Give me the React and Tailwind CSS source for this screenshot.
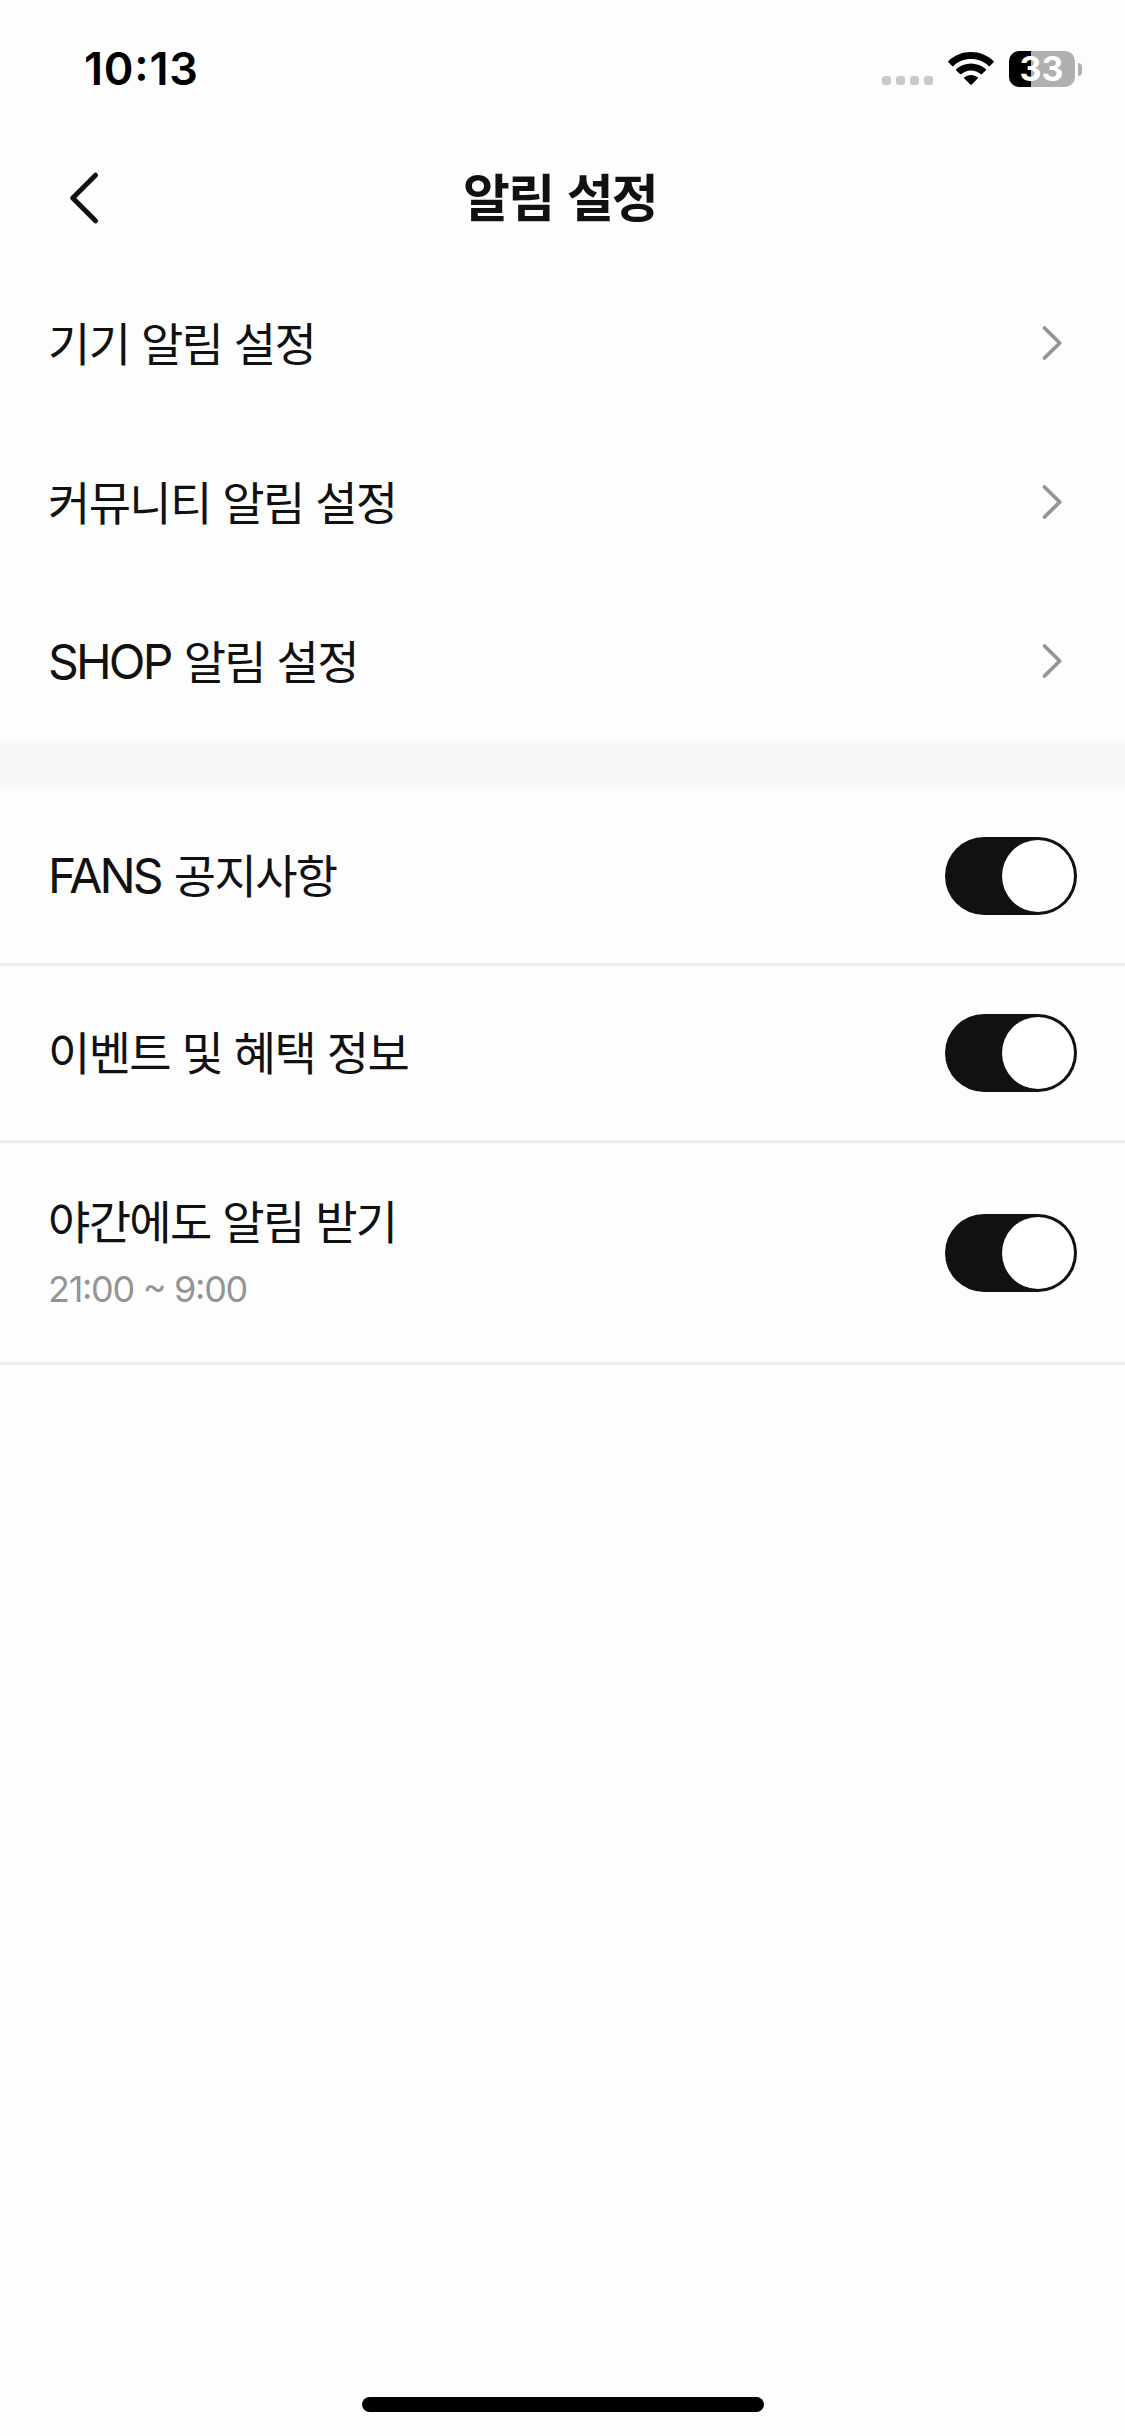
const links = [
  { hangul: '기기 알림 설정' },
  { hangul: '커뮤니티 알림 설정' },
  { latin: 'SHOP', hangul: '알림 설정' },
];

const toggles = [
  { latin: 'FANS', hangul: '공지사항' },
  { hangul: '이벤트 및 혜택 정보' },
  { hangul: '야간에도 알림 받기', note: '21:00 ~ 9:00' },
];

function Label({ latin, hangul }) {
  return (
    <span className={`flex items-baseline whitespace-nowrap leading-[60px] ${latin ? 'pb-[3px]' : 'pb-[6px]'}`}>
      {latin && (
        <span className="mr-[13px] font-['Inter','Noto_Sans_CJK_KR',sans-serif] text-[48px] tracking-[-2.8px]">
          {latin}
        </span>
      )}
      <span className="font-['Noto_Sans_CJK_KR',sans-serif] text-[46px] tracking-[-1.67px] [word-spacing:3px]">
        {hangul}
      </span>
    </span>
  );
}

function StatusBar() {
  return (
    <div className="flex h-[132px] items-start justify-between pl-[84px] pr-[43px]">
      <div className="mt-[42px] font-['Inter',sans-serif] text-[45px] font-semibold leading-[54px] tracking-[0.8px] text-black [font-feature-settings:'case']">
        10:13
      </div>
      <div className="mt-[51px] flex h-9 items-start">
        <div className="mt-[25px] flex gap-[5px]">
          {[0, 1, 2, 3].map((i) => (
            <span key={i} className="size-[9px] rounded-[3px] bg-[#c9c9c9]" />
          ))}
        </div>
        <svg className="ml-[15px] mt-px h-[33px] w-[46px]" viewBox="0 0 46 33" fill="black">
          <path d="M23 0C14.300 0 6.300 3.400 0.400 9Q-0.200 9.700 0.400 10.300L4.100 14Q4.700 14.600 5.400 14C10 9.700 16.200 7.100 23 7.100S36 9.700 40.600 14Q41.300 14.600 41.900 14L45.600 10.300Q46.200 9.700 45.600 9C39.700 3.400 31.700 0 23 0Z" />
          <path d="M23 11.400C17.300 11.400 12.200 13.600 8.300 17.100Q7.700 17.800 8.300 18.400L12 22.100Q12.600 22.600 13.300 22.100C15.900 19.800 19.300 18.400 23 18.400S30.100 19.800 32.700 22.100Q33.400 22.600 34 22.100L37.700 18.400Q38.300 17.800 37.700 17.100C33.800 13.600 28.700 11.400 23 11.400Z" />
          <path d="M23 22.900C20.400 22.900 18.100 23.800 16.300 25.300Q15.700 25.900 16.300 26.500L22.300 32.500Q23 33.100 23.700 32.500L29.700 26.500Q30.300 25.900 29.700 25.300C27.900 23.800 25.600 22.900 23 22.900Z" />
        </svg>
        <div className="ml-[15px] flex h-9 w-[66px] items-center justify-center rounded-[10px] bg-[linear-gradient(to_right,#000_22px,#b0b0b0_22px)] pr-px font-['Inter',sans-serif] text-[34px] font-bold leading-9 text-white">
          33
        </div>
        <span className="ml-[3px] mt-3 h-[13px] w-1 rounded-r-full bg-[#b0b0b0]" />
      </div>
    </div>
  );
}

function Header() {
  return (
    <header className="grid h-[132px] grid-cols-[1fr_auto_1fr] items-center">
      <svg className="ml-[66px] h-[60px] w-9" viewBox="0 0 36 60" fill="none" stroke="#111" strokeWidth="5" strokeLinecap="round" strokeLinejoin="round">
        <path d="M29.500 7.200L6.700 30L29.500 52.800" />
      </svg>
      <h1 className="whitespace-nowrap pb-[7px] pr-[5px] font-['Noto_Sans_CJK_KR',sans-serif] text-[51px] font-bold leading-[60px] tracking-[-1.9px] [word-spacing:4px]">
        알림 설정
      </h1>
    </header>
  );
}

function Toggle() {
  return (
    <span role="switch" aria-checked="true" className="flex h-[78px] w-[132px] items-center justify-end rounded-full bg-[#111] p-[3px]">
      <span className="size-[72px] rounded-full bg-white" />
    </span>
  );
}

export default function App() {
  return (
    <div className="flex h-[2436px] w-[1125px] flex-col bg-[#fdfdfd] text-[#111]">
      <StatusBar />
      <Header />
      <nav>
        {links.map((item) => (
          <div key={item.hangul + (item.latin ?? '')} className="flex h-[159px] items-center justify-between pl-12 pr-[60px]">
            <Label {...item} />
            <svg className="mb-px h-10 w-6" viewBox="0 0 24 40" fill="none" stroke="#949494" strokeWidth="3.8" strokeLinecap="round" strokeLinejoin="round">
              <path d="M3.500 5L18.700 20L3.500 35" />
            </svg>
          </div>
        ))}
      </nav>
      <div className="h-12 bg-[#f8f8f8]" />
      <main className="grow">
        {toggles.map((item) => (
          <div
            key={item.hangul}
            className={`flex items-center justify-between border-b-[3px] border-[#eee] px-12 ${item.note ? 'h-[222px]' : 'h-[177px]'}`}
          >
            <div>
              <Label {...item} />
              {item.note && (
                <p className="mt-[7px] font-['Inter',sans-serif] text-[36px] leading-[54px] tracking-[-1.3px] text-[#949494] [font-feature-settings:'case']">{item.note}</p>
              )}
            </div>
            <Toggle />
          </div>
        ))}
      </main>
      <div className="mb-6 ml-[362px] h-[15px] w-[402px] rounded-full bg-black" />
    </div>
  );
}
